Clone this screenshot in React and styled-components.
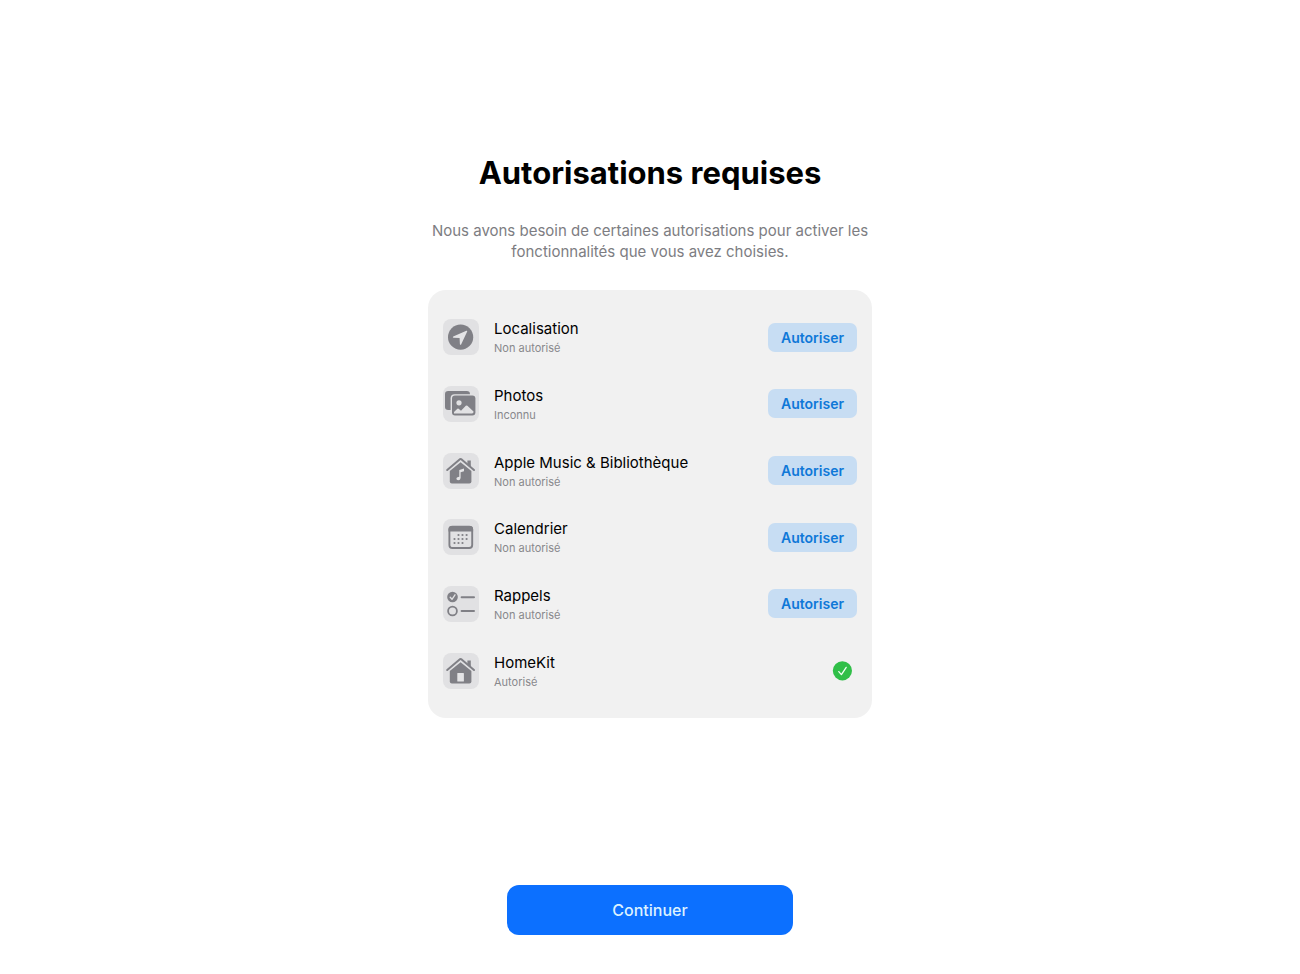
import styled, { createGlobalStyle } from "styled-components";
import { useState } from "react";


export default function App(){
    const [permissions, setPermissions] = useState(initialPermissions);

    function authorize(id){
        setPermissions(permissions.map((p) =>
            p.id === id ? { ...p, status: "Autorisé", granted: true } : p
        ));
    }

    return(
        <>
            <GlobalStyle />
            <Page>
                <Content>
                    <Title>Autorisations requises</Title>
                    <Subtitle>
                        Nous avons besoin de certaines autorisations pour activer les fonctionnalités que vous avez choisies.
                    </Subtitle>
                    <Card>
                        {permissions.map((p) =>
                            <Permission key={p.id}>
                                <Tile>{p.icon}</Tile>
                                <Labels>
                                    <Name id={p.id}>{p.name}</Name>
                                    <Status>{p.status}</Status>
                                </Labels>
                                {p.granted
                                    ? <GrantedIcon />
                                    : <Authorize aria-describedby={p.id} onClick={() => authorize(p.id)}>Autoriser</Authorize>
                                }
                            </Permission>
                        )}
                    </Card>
                </Content>
                <Continue>Continuer</Continue>
            </Page>
        </>
    )
}

function LocationIcon(){
    return(
        <Glyph viewBox="0 0 36 36">
            <circle cx="17.6" cy="18.2" r="12.6" fill="#808086" />
            <path d="M23.4 11.8 L10.2 17.5 Q9.3 18.2 10.4 18.8 L16.6 19 L16.9 25.2 Q17.3 26.3 18.1 25.4 L24.2 12.5 Q24.4 11.6 23.4 11.8Z" fill="#e4e4e6" />
        </Glyph>
    )
}

function PhotosIcon(){
    return(
        <Glyph viewBox="0 0 36 36">
            <rect x="2" y="5" width="25" height="19" rx="3.2" fill="#808086" />
            <rect x="7.6" y="8.2" width="26.2" height="22.6" rx="4" fill="#e2e2e4" />
            <rect x="9" y="9.6" width="23.4" height="19.8" rx="3" fill="#808086" />
            <circle cx="16" cy="16.8" r="2.6" fill="#e2e2e4" />
            <path d="M11 27.4 V26 L14.4 22.7 Q15 22.2 15.6 22.7 L18 24.7 L22.8 19.8 Q23.6 19 24.4 19.8 L30.5 25.4 V26 Q30.5 27.4 29 27.4Z" fill="#e2e2e4" />
        </Glyph>
    )
}

function HouseIcon({ children }){
    return(
        <Glyph viewBox="0 0 36 36">
            <path d="M24.4 7.4 H27.8 V14.5 L24.4 11.6Z" fill="#808086" />
            <path d="M4.2 17 L16.6 6.4 Q17.6 5.7 18.6 6.4 L31 17" fill="none" stroke="#808086" strokeWidth="2" strokeLinecap="round" strokeLinejoin="round" />
            <path d="M17.6 9.2 L28.4 18 V28.6 Q28.4 30.6 26.4 30.6 H8.8 Q6.8 30.6 6.8 28.6 V18Z" fill="#808086" />
            {children}
        </Glyph>
    )
}

function MusicIcon(){
    return(
        <HouseIcon>
            <path d="M16.3 17 L21 15.6 V18.2 L17.6 19.2 V25 Q17.4 27.2 15.2 27.3 Q13.3 27.2 13.4 25.5 Q13.6 24.2 15.3 24 L16.3 23.8Z" fill="#e4e4e6" />
        </HouseIcon>
    )
}

function HomeIcon(){
    return(
        <HouseIcon>
            <rect x="14.3" y="20" width="6.6" height="8.4" rx="0.5" fill="#e4e4e6" />
        </HouseIcon>
    )
}

function CalendarIcon(){
    const dots = [
        [15.5, 16], [19.5, 16], [23.6, 16],
        [11.5, 20], [15.5, 20], [19.5, 20], [23.6, 20],
        [11.5, 24], [15.5, 24], [19.5, 24],
    ];
    return(
        <Glyph viewBox="0 0 36 36">
            <rect x="6.4" y="7.8" width="22.8" height="21.2" rx="3" fill="none" stroke="#808086" strokeWidth="1.9" />
            <path d="M5.5 12.4 V10.2 Q5.5 7 8.8 7 H26.8 Q30.1 7 30.1 10.2 V12.4Z" fill="#808086" />
            {dots.map(([x, y]) =>
                <circle key={`${x}-${y}`} cx={x} cy={y} r="1.1" fill="#808086" />
            )}
        </Glyph>
    )
}

function RemindersIcon(){
    return(
        <Glyph viewBox="0 0 36 36">
            <circle cx="9.5" cy="11" r="5.3" fill="#808086" />
            <path d="M7.2 11.3 L9 13.3 L12 8.8" fill="none" stroke="#e2e2e4" strokeWidth="1.3" strokeLinecap="round" strokeLinejoin="round" />
            <circle cx="9.5" cy="25" r="4.4" fill="none" stroke="#808086" strokeWidth="1.8" />
            <path d="M18.6 11.2 H31 M18.6 25 H31" stroke="#808086" strokeWidth="2" strokeLinecap="round" />
        </Glyph>
    )
}

function GrantedIcon(){
    return(
        <Check viewBox="0 0 20 20" role="img" aria-label="Autorisé">
            <circle cx="10.4" cy="9.8" r="9.6" fill="#30bf48" />
            <path d="M6.8 10.6 L9.4 13.6 L14.2 6.4" fill="none" stroke="#f2fff4" strokeWidth="1.3" strokeLinecap="round" strokeLinejoin="round" />
        </Check>
    )
}

const initialPermissions = [
    { id: "localisation", name: "Localisation", status: "Non autorisé", icon: <LocationIcon /> },
    { id: "photos", name: "Photos", status: "Inconnu", icon: <PhotosIcon /> },
    { id: "musique", name: "Apple Music & Bibliothèque", status: "Non autorisé", icon: <MusicIcon /> },
    { id: "calendrier", name: "Calendrier", status: "Non autorisé", icon: <CalendarIcon /> },
    { id: "rappels", name: "Rappels", status: "Non autorisé", icon: <RemindersIcon /> },
    { id: "homekit", name: "HomeKit", status: "Autorisé", granted: true, icon: <HomeIcon /> },
];

const GlobalStyle = createGlobalStyle`
    * {
        box-sizing: border-box;
    }
    body {
        margin: 0;
        background-color: #fff;
        font-family: Inter, "Liberation Sans", sans-serif;
    }
    button {
        font-family: inherit;
        border: none;
        cursor: pointer;
    }
`

const Page = styled.div`
    min-height: 100vh;
    display: flex;
    flex-direction: column;
    align-items: center;
    justify-content: space-between;
    padding: 152px 20px 39px;
`

const Content = styled.main`
    width: 100%;
    display: flex;
    flex-direction: column;
    align-items: center;
`

const Title = styled.h1`
    margin: 0;
    font-size: 31px;
    line-height: 42px;
    font-weight: 700;
    color: #000;
    text-align: center;
`

const Subtitle = styled.p`
    max-width: 460px;
    margin: 26px 0 28px;
    font-size: 15px;
    line-height: 21px;
    color: #7d7d82;
    text-align: center;
`

const Card = styled.ul`
    width: 100%;
    max-width: 444px;
    min-height: 428px;
    margin: 0;
    padding: 14px 15px;
    display: grid;
    grid-auto-rows: 1fr;
    list-style: none;
    background-color: #f1f1f1;
    border-radius: 18px;
`

const Permission = styled.li`
    display: flex;
    align-items: center;
    gap: 15px;
`

const Tile = styled.div`
    width: 36px;
    height: 36px;
    flex-shrink: 0;
    background-color: #e1e1e3;
    border-radius: 8px;
`

const Glyph = styled.svg`
    display: block;
    width: 100%;
    height: 100%;
`

const Labels = styled.div`
    flex: 1;
    display: flex;
    flex-direction: column;
    padding-top: 2px;
`

const Name = styled.span`
    font-size: 15px;
    line-height: 20px;
    color: #000;
`

const Status = styled.span`
    font-size: 11px;
    line-height: 18px;
    color: #88888c;
`

const Authorize = styled.button`
    height: 29px;
    padding: 0 13px;
    background-color: #c7ddf3;
    border-radius: 7px;
    font-size: 14px;
    font-weight: 600;
    color: #0f78d8;
`

const Check = styled.svg`
    width: 20px;
    height: 20px;
    margin-right: 5px;
`

const Continue = styled.button`
    width: 100%;
    max-width: 286px;
    height: 50px;
    background-color: #0c70ff;
    border-radius: 12px;
    font-size: 16px;
    font-weight: 500;
    color: #dcf2ff;
`
